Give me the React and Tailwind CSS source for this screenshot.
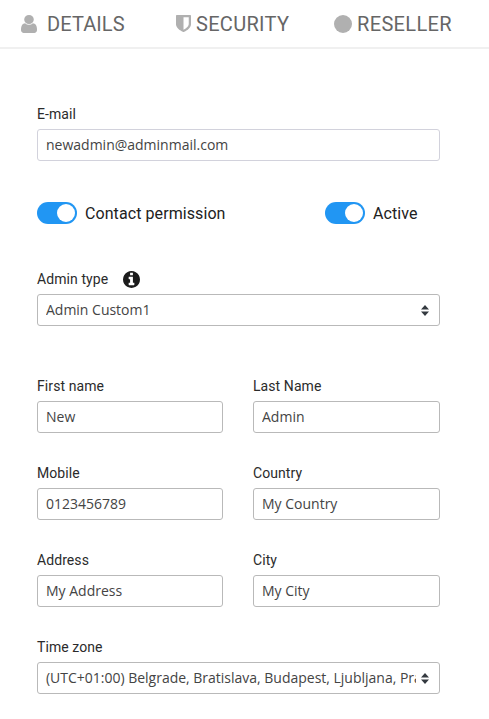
import React from "react";

function Icon({ d, box, className }) {
  return (
    <svg viewBox={box} className={className} fill="currentColor" preserveAspectRatio="none" aria-hidden="true">
      <path d={d} />
    </svg>
  );
}

const USER =
  "M1536 1399q0 109-62.5 187t-150.5 78h-854q-88 0-150.5-78t-62.5-187q0-85 8.5-160.5t31.5-152 58.5-131 94-89 134.5-34.5q131 128 313 128t313-128q76 0 134.5 34.5t94 89 58.5 131 31.5 152 8.5 160.5zm-256-887q0 159-112.5 271.5t-271.5 112.5-271.5-112.5-112.5-271.5 112.5-271.5 271.5-112.5 271.5 112.5 112.5 271.5z";
const SHIELD =
  "M1344 960v-640h-448v1137q119-63 213-137 235-184 235-360zm192-768v768q0 86-33.5 170.5t-83 150-118 127.5-126.5 103-121 77.5-89.5 49.5-42.5 20q-12 6-26 6t-26-6q-16-7-42.5-20t-89.5-49.5-121-77.5-126.5-103-118-127.5-83-150-33.5-170.5v-768q0-26 19-45t45-19h1152q26 0 45 19t19 45z";
const INFO =
  "M1152 1376v-160q0-14-9-23t-23-9h-96v-512q0-14-9-23t-23-9h-320q-14 0-23 9t-9 23v160q0 14 9 23t23 9h96v320h-96q-14 0-23 9t-9 23v160q0 14 9 23t23 9h448q14 0 23-9t9-23zm-128-896v-160q0-14-9-23t-23-9h-192q-14 0-23 9t-9 23v160q0 14 9 23t23 9h192q14 0 23-9t9-23zm640 416q0 209-103 385.5t-279.5 279.5-385.5 103-385.5-103-279.5-279.5-103-385.5 103-385.5 279.5-279.5 385.5-103 385.5 103 279.5 279.5 103 385.5z";

function Field({ label, value, border = "border-[#b9b9b9]", info, select }) {
  return (
    <div className="flex min-w-0 flex-col">
      <div className="flex h-[30px] items-start text-sm leading-[30px] tracking-[0.08px] text-[#2b2b2b]">
        <span>{label}</span>
        {info && <Icon d={INFO} box="128 128 1536 1536" className="mt-[7px] ml-[15px] size-[17px] text-[#1c1c1c]" />}
      </div>
      <div className={`flex h-8 items-center rounded-[3px] border bg-white pl-2 ${border} ${select ? "pr-[10px]" : "pr-2"}`}>
        <span className={`min-w-0 flex-1 overflow-hidden font-['Open_Sans',sans-serif] text-sm leading-[30px] whitespace-nowrap text-[#444] ${select ? "tracking-[-0.01px]" : ""}`}>
          {value}
        </span>
        {select && (
          <svg viewBox="0 0 8 11" className="ml-[5px] h-[11px] w-2 shrink-0 fill-[#343a40]" aria-hidden="true">
            <path d="M4 0L8 4.4H0zM0 6.6H8L4 11z" />
          </svg>
        )}
      </div>
    </div>
  );
}

function Toggle({ label }) {
  return (
    <div className="flex h-[22px] items-start gap-2 text-base leading-6 tracking-[0.08px] text-[#212121]">
      <span className="flex h-[22px] w-10 items-center justify-end rounded-full bg-[#2196f3] pr-[2px]">
        <span className="size-[18px] rounded-full bg-white" />
      </span>
      <span>{label}</span>
    </div>
  );
}

export default function App() {
  return (
    <div className="h-[719px] w-[489px] overflow-hidden bg-white font-['Roboto',sans-serif]">
      <header className="flex h-[49px] items-center border-b-2 border-[#f0f0f0] pl-[21px] text-xl text-[#666]">
        <div className="flex w-[155px] items-center">
          <Icon d={USER} box="256 128 1280 1536" className="mr-[10px] h-[18px] w-4 text-[#b0b0b0]" />
          <span className="pt-px tracking-[0.1px]">DETAILS</span>
        </div>
        <div className="flex w-[158px] items-center">
          <Icon d={SHIELD} box="256 128 1280 1536" className="mr-[5px] h-[17px] w-[15px] text-[#b0b0b0]" />
          <span className="pt-px tracking-[0.3px]">SECURITY</span>
        </div>
        <div className="flex items-center">
          <span className="mr-[5px] size-[18px] rounded-full bg-[#b0b0b0]" />
          <span className="pt-px tracking-[0.35px]">RESELLER</span>
        </div>
      </header>
      <main className="flex w-[440px] flex-col pt-[50px] pl-[37px]">
        <Field label="E-mail" value="newadmin@adminmail.com" border="border-[#d2d2dc]" />
        <div className="mt-[41px] mb-10 grid h-[22px] grid-cols-[288px_1fr]">
          <Toggle label="Contact permission" />
          <Toggle label="Active" />
        </div>
        <Field label="Admin type" value="Admin Custom1" info select />
        <div className="mt-[45px] mb-[25px] grid grid-cols-[186px_187px] gap-x-[30px] gap-y-[25px]">
          <Field label="First name" value="New" />
          <Field label="Last Name" value="Admin" />
          <Field label="Mobile" value="0123456789" />
          <Field label="Country" value="My Country" />
          <Field label="Address" value="My Address" />
          <Field label="City" value="My City" />
        </div>
        <Field label="Time zone" value="(UTC+01:00) Belgrade, Bratislava, Budapest, Ljubljana, Prague" select />
      </main>
    </div>
  );
}
